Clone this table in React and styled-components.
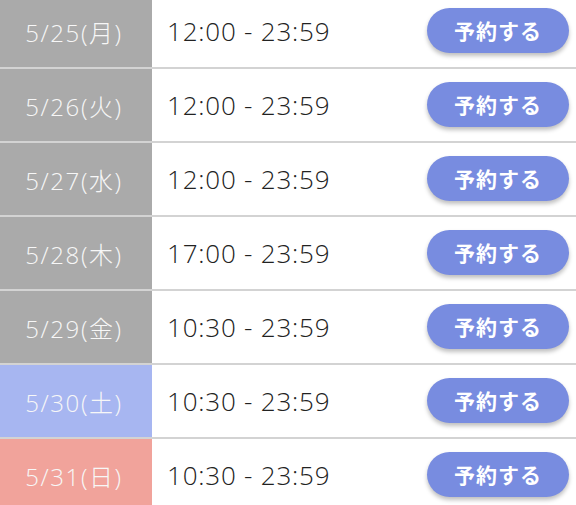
import styled, { createGlobalStyle } from "styled-components";

const GlobalStyle = createGlobalStyle`
    body {
        margin: 0;
        background: #ffffff;
        font-family: "Open Sans", "Noto Sans CJK JP", sans-serif;
        overflow: hidden;
    }
`;

const Table = styled.div`
    width: 576px;
    margin-top: -5px;
`;

const Row = styled.div`
    display: flex;
    height: 72px;
    border-bottom: 2px solid #d3d3d3;
`;

const DateCell = styled.div`
    width: 152px;
    flex-shrink: 0;
    display: flex;
    align-items: center;
    justify-content: center;
    padding-right: 4px;
    box-sizing: border-box;
    background-color: ${props => props.bg};
    color: #f7f7f7;
    font-size: 24px;
    font-weight: 300;
    letter-spacing: 1.6px;
`;

const TimeCell = styled.div`
    flex: 1;
    display: flex;
    align-items: center;
    padding-left: 15px;
    color: #222222;
    font-size: 26px;
    font-weight: 300;
    letter-spacing: 0.8px;
`;

const ButtonCell = styled.div`
    display: flex;
    align-items: center;
    padding-right: 7px;
`;

const Button = styled.button`
    width: 142px;
    height: 45px;
    margin-top: -2px;
    border: none;
    border-radius: 23px;
    background-color: #788ce0;
    color: #ffffff;
    font-family: "Noto Sans CJK JP", sans-serif;
    font-size: 21px;
    font-weight: 700;
    letter-spacing: 1px;
    box-shadow: 0 3px 4px rgba(0, 0, 0, 0.25);
    cursor: pointer;
`;

const days = [
    { date: "5/25(月)", time: "12:00 - 23:59", bg: "#aaaaaa" },
    { date: "5/26(火)", time: "12:00 - 23:59", bg: "#aaaaaa" },
    { date: "5/27(水)", time: "12:00 - 23:59", bg: "#aaaaaa" },
    { date: "5/28(木)", time: "17:00 - 23:59", bg: "#aaaaaa" },
    { date: "5/29(金)", time: "10:30 - 23:59", bg: "#aaaaaa" },
    { date: "5/30(土)", time: "10:30 - 23:59", bg: "#a7b6f1" },
    { date: "5/31(日)", time: "10:30 - 23:59", bg: "#f1a39b" },
];

const App = () => {
    return (
        <>
            <GlobalStyle />
            <Table>
                {days.map(day => (
                    <Row key={day.date}>
                        <DateCell bg={day.bg}>{day.date}</DateCell>
                        <TimeCell>{day.time}</TimeCell>
                        <ButtonCell>
                            <Button>予約する</Button>
                        </ButtonCell>
                    </Row>
                ))}
            </Table>
        </>
    );
};

export default App
